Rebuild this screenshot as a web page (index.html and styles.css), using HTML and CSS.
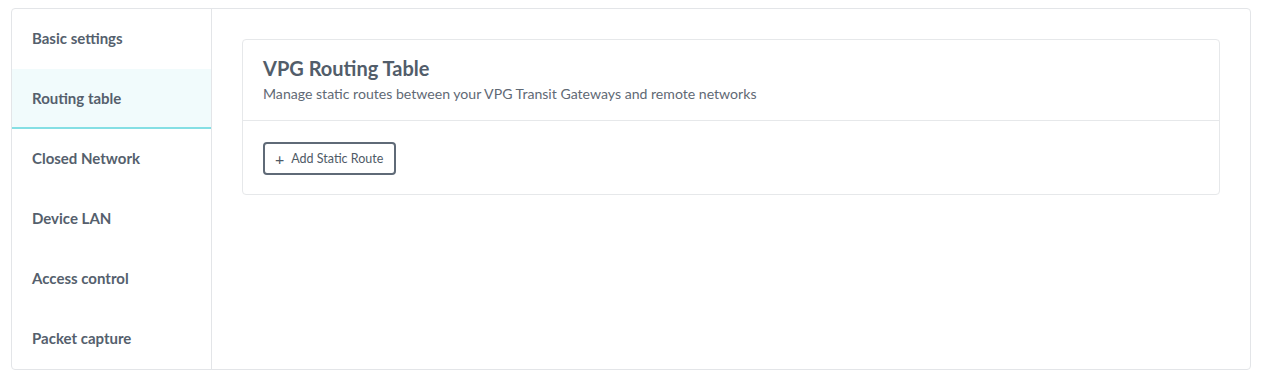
FILE: index.html
```html
<!DOCTYPE html>
<html lang="en">
<head>
<meta charset="utf-8">
<title>VPG Routing Table</title>
<link rel="stylesheet" href="styles.css">
</head>
<body>
<div class="panel">
  <nav class="sidebar">
    <div class="nav-item">Basic settings</div>
    <div class="nav-item active">Routing table</div>
    <div class="nav-item">Closed Network</div>
    <div class="nav-item">Device LAN</div>
    <div class="nav-item">Access control</div>
    <div class="nav-item">Packet capture</div>
  </nav>
  <main class="content">
    <section class="card">
      <header class="card-header">
        <h2 class="card-title">VPG Routing Table</h2>
        <p class="card-sub">Manage static routes between your VPG Transit Gateways and remote networks</p>
      </header>
      <div class="card-body">
        <button class="btn"><span class="plus">+</span>Add Static Route</button>
      </div>
    </section>
  </main>
</div>
</body>
</html>
```
FILE: styles.css
```css
* { box-sizing: border-box; }
html, body { margin: 0; padding: 0; background: #fff; }
body {
  padding: 8px 10px 0 11px;
  font-family: Lato, "Noto Sans", sans-serif;
  color: #545f6c;
}
.panel {
  display: flex;
  width: 1240px;
  height: 362px;
  border: 1px solid #e3e5e8;
  border-radius: 4px;
}
.sidebar {
  width: 200px;
  flex: none;
  border-right: 1px solid #e3e5e8;
  display: flex;
  flex-direction: column;
}
.nav-item {
  height: 60px;
  display: flex;
  align-items: center;
  padding: 0 0 2px 20px;
  font-size: 15px;
  font-weight: 700;
  color: #555f6d;
}
.nav-item.active {
  background: #f1fbfc;
  border-bottom: 2px solid #85dfe4;
  padding-bottom: 0;
}
.content {
  flex: 1;
  padding: 30px;
}
.card {
  border: 1px solid #e6e8ea;
  border-radius: 4px;
}
.card-header {
  padding: 17px 20px 17px;
  border-bottom: 1px solid #e6e8ea;
}
.card-title {
  margin: 0;
  font-size: 20px;
  line-height: 22px;
  font-weight: 700;
  color: #525d6a;
}
.card-sub {
  margin: 5px 0 0;
  font-size: 14.1px;
  line-height: 19px;
  color: #5f6975;
}
.card-body {
  padding: 21px 20px 19px;
}
.btn {
  height: 33px;
  padding: 0 11px 0 10px;
  border: 2px solid #5f6a77;
  border-radius: 4px;
  background: #fff;
  font-family: Lato, "Noto Sans", sans-serif;
  font-size: 12.5px;
  color: #4f5a66;
  display: inline-flex;
  align-items: center;
}
.plus {
  font-size: 16px;
  margin-right: 7px;
  line-height: 1;
}
```
